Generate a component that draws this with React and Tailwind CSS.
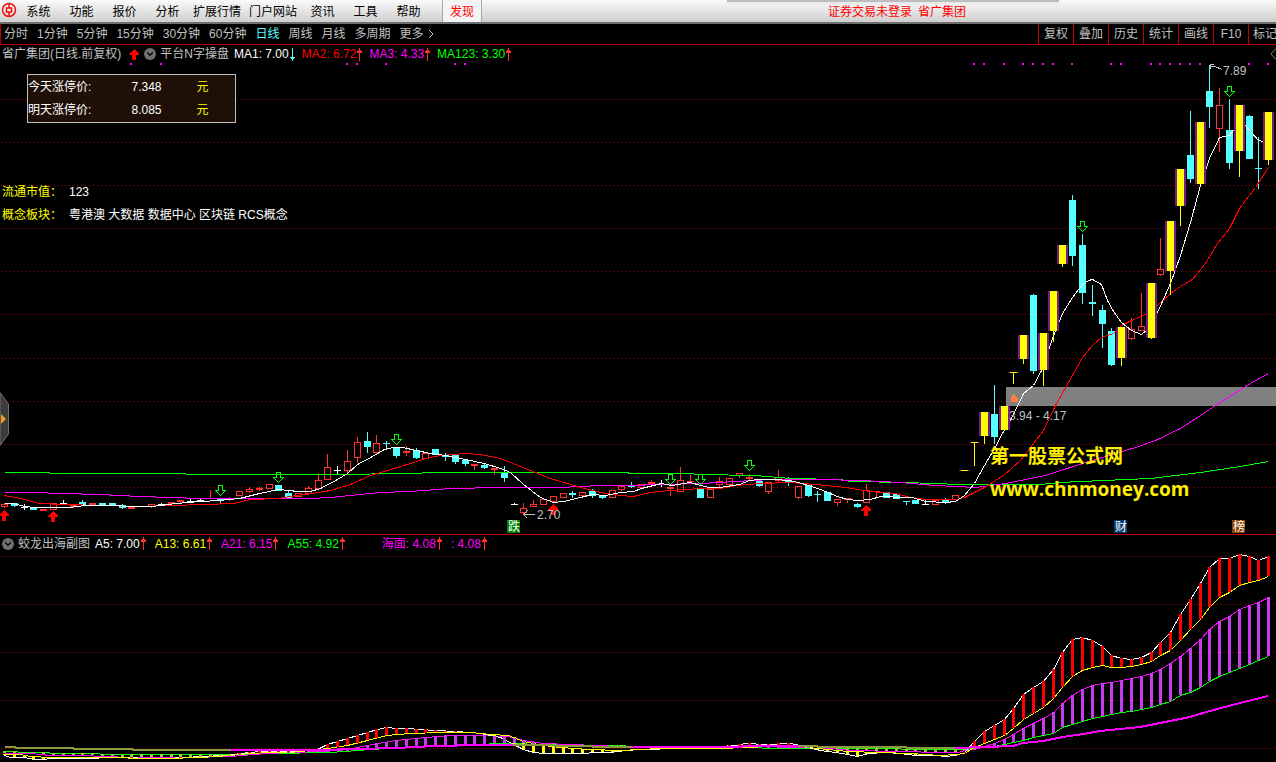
import React from "react";
import { ChevronDown } from "lucide-react";

const menus = ["系统", "功能", "报价", "分析", "扩展行情", "门户网站", "资讯", "工具", "帮助"];
const periods = ["分时", "1分钟", "5分钟", "15分钟", "30分钟", "60分钟", "日线", "周线", "月线", "多周期"];
const tools = ["复权", "叠加", "历史", "统计", "画线", "F10", "标记"];

const limits = [
  { label: "今天涨停价:", value: "7.348" },
  { label: "明天涨停价:", value: "8.085" },
];

const mainValues = [
  { text: "MA1: 7.00", color: "text-white", down: true },
  { text: "MA2: 6.72", color: "text-[#ff0000]" },
  { text: "MA3: 4.33", color: "text-[#ff00ff]" },
  { text: "MA123: 3.30", color: "text-[#00ff00]" },
];

const subValues = [
  { text: "A5: 7.00", color: "text-white" },
  { text: "A13: 6.61", color: "text-[#ffff00]" },
  { text: "A21: 6.15", color: "text-[#ff00ff]" },
  { text: "A55: 4.92", color: "text-[#00ff00]" },
];

const seaValues = [
  { text: "海面: 4.08", color: "text-[#ff00ff]" },
  { text: ": 4.08", color: "text-[#ff00ff]" },
];

// [kind, body top, body bottom, high, low]
// c = falling, r = rising, f = flat rising, w = doji, y = strong day
const candles = [
  ["r", 504, 507, 503, 508], ["c", 503, 506, 503, 507], ["w", 507, 508, 504, 510], ["c", 507, 510, 507, 510],
  ["f", 509, 511, 509, 511], ["r", 503, 510, 503, 510], ["w", 503, 504, 500, 504], ["f", 505, 507, 505, 508],
  ["c", 502, 505, 500, 505], ["f", 503, 505, 503, 505], ["c", 503, 505, 503, 506], ["c", 503, 506, 503, 506],
  ["c", 505, 508, 504, 509], ["f", 506, 509, 506, 509], ["f", 506, 507, 506, 507], ["r", 504, 507, 504, 508],
  ["w", 504, 505, 503, 506], ["f", 502, 504, 502, 504], ["f", 500, 502, 500, 503], ["w", 501, 502, 499, 503],
  ["w", 500, 501, 498, 502], ["f", 498, 499, 490, 499], ["c", 499, 501, 499, 503], ["f", 498, 499, 497, 501],
  ["r", 491, 496, 491, 496], ["r", 489, 492, 487, 493], ["f", 488, 490, 487, 491], ["r", 484, 489, 484, 489],
  ["c", 485, 491, 485, 491], ["c", 493, 498, 490, 498], ["r", 493, 497, 493, 497], ["r", 488, 494, 486, 495],
  ["r", 480, 489, 473, 490], ["r", 467, 480, 454, 480], ["w", 470, 471, 466, 474], ["r", 461, 471, 450, 473],
  ["r", 442, 458, 437, 463], ["c", 441, 447, 432, 453], ["r", 443, 453, 435, 455], ["c", 443, 444, 441, 449],
  ["c", 447, 456, 447, 458], ["f", 451, 453, 446, 456], ["c", 450, 458, 448, 459], ["r", 453, 459, 453, 459],
  ["c", 449, 455, 449, 455], ["c", 455, 457, 453, 461], ["c", 455, 462, 455, 464], ["c", 460, 464, 459, 466],
  ["f", 464, 466, 464, 470], ["c", 465, 468, 463, 469], ["f", 468, 470, 468, 475], ["c", 472, 478, 466, 482],
  ["w", 504, 505, 503, 505], ["r", 508, 513, 503, 515], ["r", 504, 507, 500, 507], ["r", 499, 505, 499, 505],
  ["r", 496, 502, 496, 502], ["r", 493, 498, 493, 498], ["c", 493, 495, 491, 498], ["r", 492, 496, 492, 498],
  ["c", 491, 496, 489, 498], ["c", 496, 498, 495, 499], ["r", 490, 498, 490, 498], ["r", 486, 490, 486, 491],
  ["c", 485, 487, 482, 488], ["r", 484, 488, 484, 490], ["r", 482, 484, 480, 484], ["w", 484, 485, 480, 487],
  ["f", 487, 489, 487, 496], ["r", 480, 492, 467, 492], ["f", 481, 482, 475, 482], ["c", 489, 498, 488, 498],
  ["r", 489, 498, 489, 498], ["r", 481, 485, 477, 488], ["r", 478, 485, 478, 485], ["r", 473, 476, 473, 478],
  ["f", 477, 479, 474, 480], ["c", 481, 486, 481, 487], ["r", 482, 492, 482, 494], ["r", 477, 481, 470, 482],
  ["c", 480, 482, 477, 486], ["r", 486, 498, 486, 499], ["c", 485, 496, 485, 497], ["c", 494, 495, 491, 502],
  ["c", 492, 501, 492, 501], ["r", 499, 503, 499, 506], ["f", 498, 500, 498, 503], ["c", 504, 507, 503, 508],
  ["r", 490, 503, 484, 503], ["f", 491, 492, 491, 497], ["c", 492, 498, 492, 498], ["c", 494, 499, 493, 499],
  ["c", 501, 502, 501, 505], ["c", 500, 504, 500, 504], ["w", 504, 505, 500, 505], ["r", 500, 505, 500, 505],
  ["c", 500, 502, 498, 504], ["r", 495, 500, 495, 500], ["y", 470, 471, 470, 471], ["y", 442, 443, 442, 466],
  ["y", 412, 436, 412, 444], ["c", 414, 437, 385, 444], ["y", 406, 430, 406, 430], ["y", 372, 373, 372, 384],
  ["y", 335, 359, 335, 364], ["c", 295, 371, 294, 374], ["y", 333, 370, 333, 386], ["y", 291, 331, 291, 342],
  ["y", 245, 264, 245, 267], ["c", 200, 256, 195, 266], ["c", 245, 293, 234, 304], ["c", 302, 304, 285, 316],
  ["c", 310, 324, 305, 348], ["c", 331, 365, 328, 366], ["y", 327, 358, 327, 366], ["r", 329, 339, 318, 340],
  ["r", 326, 331, 293, 331], ["y", 283, 338, 283, 339], ["r", 269, 275, 238, 276], ["y", 221, 271, 221, 295],
  ["y", 169, 206, 169, 226], ["c", 155, 179, 111, 183], ["y", 122, 184, 122, 184], ["c", 91, 107, 65, 128],
  ["r", 105, 129, 88, 152], ["c", 130, 163, 99, 169], ["y", 105, 151, 105, 177], ["c", 116, 159, 115, 159],
  ["c", 168, 169, 137, 189], ["y", 112, 160, 112, 165],
];

const colors = { c: "#54ffff", r: "#ff3232", f: "#ff3232", w: "#ffffff", y: "#ffff00" };

const barX = (i) => Math.round(4 + i * 9.8);

const mainLines = [
  {
    color: "#00ff00",
    points: "4,472 49,472 50,473 185,473 186,474 320,474 421,473 422,472 626,472 630,473 686,473 700,474 755,475 790,478 840,479 850,481 905,482 960,484 1040,484 1060,482 1080,481 1150,478 1200,472 1240,466 1268,461",
  },
  {
    color: "#ff00ff",
    points: "4,492 30,492 98,494 140,496 200,498 225,498 310,498 330,497 350,495 380,492 410,491 450,488 500,487 560,487 600,485 630,485 660,484 700,483 735,481 770,479 820,479 860,480 900,482 935,485 955,486 975,487 1005,483 1045,475 1085,462 1135,447 1155,440 1180,428 1200,415 1215,405 1250,383 1268,373",
  },
  {
    color: "#ff0000",
    points: "4,495 15,497 25,499 38,503 65,504 100,505 140,506 170,505 205,504 233,503 250,499 278,498 295,495 312,493 330,490 350,484 370,475 390,469 410,463 425,458 440,455 465,453 480,454 500,458 525,468 550,478 580,487 605,493 620,495 633,496 650,492 670,490 700,488 720,488 735,485 760,483 790,482 815,484 845,487 870,491 895,493 910,497 925,499 955,499 964,497 984,487 1003,475 1020,460 1043,430 1055,405 1068,382 1082,357 1092,345 1101,337 1113,333 1121,325 1131,320 1145,314 1157,305 1170,293 1180,286 1192,279 1205,263 1217,243 1229,228 1239,208 1255,187 1268,167",
  },
  {
    color: "#ffffff",
    points: "4,503 13,503 24,506 34,507 68,507 85,505 112,505 131,506 151,506 161,505 175,503 200,501 219,500 239,498 259,493 278,489 298,491 310,491 320,488 337,479 347,473 357,464 372,456 384,449 393,447 402,447 416,450 430,453 445,455 465,459 484,463 500,468 510,472 523,484 540,497 553,502 563,501 580,497 592,494 605,495 620,492 633,491 641,488 661,483 671,485 690,482 700,485 709,487 719,487 739,484 749,480 758,479 775,479 788,480 798,482 808,485 820,489 837,496 847,499 858,500 870,499 880,496 905,497 912,497 925,501 945,502 955,501 964,495 974,483 984,465 994,448 1003,431 1013,414 1023,393 1033,385 1041,370 1052,338 1062,313 1072,297 1082,284 1088,280 1092,279 1101,284 1107,300 1113,311 1121,322 1131,330 1141,334 1147,329 1157,312 1170,283 1180,255 1190,222 1200,185 1209,158 1219,137 1229,135 1234,129 1239,122 1245,125 1258,140 1263,141",
  },
];

// lower panel, left part as points, right part one value per bar from bar 98
const tail = (ys) => ys.map((y, n) => [barX(98 + n), y]);
const parse = (text) => text.split(" ").map((p) => p.split(",").map(Number));

const a5 = [
  ...parse("4,755 10,757 24,757 34,759 43,759 50,758 88,758 110,757 165,758 185,757 200,756 225,755 240,753 260,751 280,751 300,751 310,750 317,749 327,744 337,741 347,738 357,735 367,732 377,729 386,727 396,728 406,728 435,730 455,731 470,732 480,733 490,735 500,737 513,744 523,749 533,752 543,753 568,753 610,752 625,750 640,749 680,748 700,747 735,745 745,743 765,744 790,743 800,745 808,747 820,750 835,752 847,754 857,756 868,753 885,752 900,753 915,755 935,755 945,756 955,755"),
  ...tail([752, 741, 731, 725, 719, 708, 694, 687, 681, 669, 652, 639, 637, 640, 646, 655, 658, 659, 657, 652, 642, 632, 614, 599, 583, 567, 558, 558, 554, 556, 560, 556]),
];
const a13 = [
  ...parse("4,754 20,754 30,756 50,757 90,757 165,758 200,757 230,755 250,753 270,752 290,752 310,750 327,748 347,745 367,740 386,735 410,733 440,732 470,732 480,733 490,734 508,735 523,741 543,745 560,747 588,749 620,750 660,748 720,748 770,746 800,746 817,748 847,751 880,752 910,753 940,755 955,754"),
  ...tail([753, 747, 743, 739, 735, 728, 719, 713, 707, 698, 687, 676, 670, 667, 665, 667, 667, 666, 664, 661, 655, 650, 640, 629, 619, 607, 597, 592, 585, 582, 580, 576]),
];
const a21 = [
  ...parse("4,753 30,753 50,755 80,755 130,757 190,757 230,756 265,753 320,751 340,750 357,747 367,745 377,743 396,740 425,737 450,735 480,735 508,736 523,740 543,743 570,744 620,746 700,746 760,746 830,748 850,750 900,751 940,752 958,752"),
  ...tail([750, 749, 746, 743, 739, 734, 728, 723, 718, 712, 703, 695, 689, 685, 683, 682, 680, 678, 676, 673, 669, 663, 656, 648, 639, 629, 621, 616, 609, 605, 602, 597]),
];
const a55 = [
  ...parse("4,751 30,752 68,753 130,754 230,754 270,753 330,752 357,750 400,747 440,745 470,744 508,743 545,744 600,745 700,747 820,748 870,748 930,749 955,749"),
  ...tail([749, 748, 747, 746, 744, 742, 740, 737, 735, 733, 727, 724, 721, 718, 716, 714, 712, 711, 709, 707, 704, 701, 695, 692, 687, 681, 676, 672, 668, 664, 660, 656]),
];

const subLines = [
  { color: "#00ff00", points: a55 },
  { color: "#ff00ff", points: a21 },
  { color: "#ffffff", points: a5 },
  { color: "#ffff00", points: a13 },
];

const seaLines = [
  { color: "#8b9a3c", points: "5,747 15,747 16,748 73,748 74,749 132,749 133,750 231,750" },
  { color: "#ff00ff", points: "231,750 320,750 355,749 396,748 435,746 480,745 513,745" },
  { color: "#8b9a3c", points: "513,745 592,746 593,747 632,747" },
  { color: "#ff00ff", points: "632,747 740,747 745,746 798,746" },
  { color: "#8b9a3c", points: "798,746 817,746 818,747 906,747 907,748 955,748" },
  { color: "#ff00ff", points: "955,748 985,747 1013,746 1023,743 1043,741 1063,737 1083,734 1100,731 1140,727 1160,723 1190,717 1210,711 1240,703 1268,696" },
];

const yAt = (points, x) => {
  const next = points.findIndex((p) => p[0] >= x);
  if (next <= 0) return points[next === 0 ? 0 : points.length - 1][1];
  const [x0, y0] = points[next - 1];
  const [x1, y1] = points[next];
  return Math.round(y0 + ((y1 - y0) * (x - x0)) / (x1 - x0));
};

const signalDots = [13, 16, 35, 36, 39, 46, 47, 99, 100, 102, 104, 105, 106, 107, 109, 113, 114, 117, 118, 119, 120, 121, 122, 127, 129];
const sellMarks = [[220, 485], [278, 472], [396, 434], [670, 474], [700, 474], [749, 460], [1082, 221], [1229, 86]];
const buyMarks = [[4, 510], [53, 511], [553, 504], [866, 505]];
const tags = [
  { x: 507, text: "跌", fill: "#008000" },
  { x: 1114, text: "财", fill: "#003a70" },
  { x: 1232, text: "榜", fill: "#8b4000" },
];

const GridLines = ({ rows }) =>
  rows.map((y) => (
    <line key={y} x1="1" x2="1276" y1={y + 0.5} y2={y + 0.5} stroke="#b00000" strokeDasharray="1 3" />
  ));

const Candle = ({ x, candle }) => {
  const [kind, top, bottom, high, low] = candle;
  const color = colors[kind];
  if (kind === "r") {
    return (
      <g>
        <rect x={x} y={high} width="1" height={top - high} fill={color} />
        <rect x={x} y={bottom} width="1" height={low - bottom} fill={color} />
        <rect x={x - 2.5} y={top + 0.5} width="6" height={bottom - top - 1} fill="none" stroke={color} />
      </g>
    );
  }
  return (
    <g>
      {kind === "y" && <rect x={x - 5} y={top} width="11" height={bottom - top} fill="#7a1a8a" />}
      <rect x={x} y={high} width="1" height={low - high} fill={color} />
      <rect x={x - 3} y={top} width="7" height={bottom - top} fill={color} />
    </g>
  );
};

const MainChart = () => (
  <svg viewBox="0 63 1276 471" className="block h-auto w-full" shapeRendering="crispEdges">
    <GridLines rows={[99, 142, 185, 228, 271, 314, 358, 401, 444, 487]} />
    {signalDots.map((i) => (
      <rect key={i} x={barX(i) - 1} y="63" width="2" height="2" fill="#ff00ff" />
    ))}
    <rect x="1006" y="387" width="270" height="19" fill="#808080" />
    {candles.map((c, i) => c[0] !== "y" && <Candle key={i} x={barX(i)} candle={c} />)}
    {mainLines.map((line) => (
      <polyline key={line.color} points={line.points} fill="none" stroke={line.color} transform="translate(0.5 0.5)" />
    ))}
    {candles.map((c, i) => c[0] === "y" && <Candle key={i} x={barX(i)} candle={c} />)}
    {sellMarks.map(([x, y]) => (
      <path key={x} d={`M${x - 1.5} ${y + 0.5}h4v5h3l-5 5l-5 -5h3z`} fill="none" stroke="#00ff00" />
    ))}
    {buyMarks.map(([x, y]) => (
      <path key={x} d={`M${x} ${y}l5 5v1h-3v5h-4v-5h-3v-1z`} fill="#ff0000" />
    ))}
    <path d="M1013.500 394l4 4v4h-7v-4z" fill="#ff8040" />
    <g fill="none" stroke="#c0c0c0">
      <path d="M1213.500 64.500h-3v4M1210 66.500h5l7 3" />
      <path d="M527.500 510.500l-4 4l4 4M523 514.500h12" />
    </g>
    {tags.map((tag) => (
      <g key={tag.text}>
        <rect x={tag.x} y="520" width="13" height="13" fill={tag.fill} />
        <text x={tag.x + 1} y="531" fontSize="12" fill="#ffffff">{tag.text}</text>
      </g>
    ))}
    <g fontSize="12" fill="#c0c0c0">
      <text x="1223" y="75">7.89</text>
      <text x="1009" y="420">3.94 - 4.17</text>
      <text x="537" y="519">2.70</text>
    </g>
    <g className="font-['Open_Sans','Noto_Sans_CJK_SC',sans-serif] font-bold" fontSize="19" fill="#ffee00">
      <text x="990" y="463">第一股票公式网</text>
      <text x="990" y="496">www.chnmoney.com</text>
    </g>
  </svg>
);

const SubChart = () => (
  <svg viewBox="0 552 1276 210" className="block h-auto w-full" shapeRendering="crispEdges">
    <GridLines rows={[556, 604, 652, 700, 748]} />
    {subLines.map((line) => (
      <polyline
        key={line.color}
        points={line.points.map((p) => p.join(",")).join(" ")}
        fill="none"
        stroke={line.color}
        transform="translate(0.5 0.5)"
      />
    ))}
    {candles.map((c, i) => {
      const x = barX(i);
      const [fast, slow, mid, base] = [a5, a13, a21, a55].map((line) => yAt(line, x));
      return (
        <g key={i}>
          <rect x={x - 1} y={Math.min(fast, slow)} width="3" height={Math.abs(fast - slow)} fill={fast < slow ? "#ff0000" : "#ffff00"} />
          <rect x={x - 1} y={Math.min(mid, base)} width="3" height={Math.abs(mid - base)} fill={mid < base ? "#c83cf0" : "#9acd32"} />
        </g>
      );
    })}
    {seaLines.map((line) => (
      <polyline key={line.points} points={line.points} fill="none" stroke={line.color} strokeWidth="2" />
    ))}
  </svg>
);

const Trend = ({ down }) => (
  <svg viewBox="0 0 6 13" className="h-[13px] w-1.5 shrink-0" shapeRendering="crispEdges">
    {down ? (
      <path d="M3 0h1v9h2v1h-1v1h-1v2h-1v-2h-1v-1h-1v-1h2z" fill="#54ffff" />
    ) : (
      <path d="M3 0h1v2h1v1h1v2h-2v8h-1v-8h-2v-2h1v-1h1z" fill="#ff3232" />
    )}
  </svg>
);

const Values = ({ items }) =>
  items.map((item) => (
    <span key={item.text} className={`flex items-center ${item.color}`}>
      {item.text}
      <Trend down={item.down} />
    </span>
  ));

const FoldButton = ({ label }) => (
  <button type="button" aria-label={label} className="flex size-3 shrink-0 items-center justify-center rounded-full bg-[#707070]">
    <ChevronDown className="size-2.5 text-black" strokeWidth={3} />
  </button>
);

const App = () => {
  return (
    <div className="min-h-screen w-full overflow-hidden bg-black font-['Liberation_Sans','Noto_Sans_CJK_SC',sans-serif] text-xs leading-4 whitespace-nowrap text-[#c0c0c0]">
      {/* Menu bar */}
      <header className="relative flex h-6 border-b-2 border-[#6e6e6e] bg-linear-to-b from-[#fafafa] to-[#cfcfcf] text-black">
        <svg viewBox="0 0 17 22" className="h-[22px] w-[17px] shrink-0" fill="none" stroke="#f01010">
          <circle cx="9" cy="10" r="6.500" strokeWidth="1.500" />
          <rect x="6.500" y="8" width="5" height="4" strokeWidth="1.500" />
          <path d="M9 4v4M9 12v4" strokeWidth="1.500" />
        </svg>
        <nav className="flex">
          {menus.map((name) => (
            <button key={name} type="button" className={name.length > 2 ? "w-14 pt-0.5" : "w-[43px] pt-0.5"}>
              {name}
            </button>
          ))}
          <button type="button" className="ml-3 w-10 border-x border-[#a8a8a8] bg-[#f4f4f4] pt-0.5 text-[#ff0000]">
            发现
          </button>
        </nav>
        <p className="flex flex-1 items-center justify-center gap-1.5 pt-0.5 pl-9 text-[#ff0000]">
          <span>证券交易未登录</span>
          <span>省广集团</span>
        </p>
        <div className="absolute top-0 left-[57%] h-0.5 w-[26%] bg-[#bdbdbd] shadow-sm"></div>
      </header>

      {/* Period bar */}
      <div className="flex h-[21px] justify-between border-b border-l border-[#c00000]">
        <div className="flex gap-[9px] pl-[3px]">
          {periods.map((name) => (
            <button key={name} type="button" className={name === "日线" ? "text-[#54ffff]" : ""}>
              {name}
            </button>
          ))}
          <button type="button" className="flex items-center gap-1">
            更多
            <svg viewBox="0 0 6 10" className="h-2.5 w-1.5" fill="none" stroke="#c0c0c0">
              <path d="M1 1l4 4l-4 4" />
            </svg>
          </button>
        </div>
        <div className="flex">
          {tools.map((name) => (
            <button
              key={name}
              type="button"
              className={`shrink-0 overflow-hidden border-l border-[#c00000] ${name === "标记" ? "w-7 pl-1" : "w-[35px]"}`}
            >
              {name}
            </button>
          ))}
        </div>
      </div>

      {/* Price panel */}
      <section className="relative border-b border-[#c00000]">
        <div className="flex h-[18px] items-center gap-[5px] pl-0.5">
          <span className="flex items-center gap-2">
            省广集团(日线.前复权)
            <svg viewBox="0 0 10 11" className="h-[11px] w-2.5" shapeRendering="crispEdges">
              <path d="M5 0l5 5v1h-3v5h-4v-5h-3v-1z" fill="#ff0000" />
            </svg>
          </span>
          <span className="flex items-center gap-1">
            <FoldButton label="主图指标" />
            平台N字操盘
          </span>
          <span className="flex items-center gap-[7px]">
            <Values items={mainValues} />
          </span>
          <svg viewBox="0 0 6 12" className="ml-auto h-3 w-1.5" fill="none" stroke="#808080">
            <path d="M6 0.500l-5 5.500l5 5.500" />
          </svg>
        </div>
        <MainChart />

        <table className="absolute top-[29px] left-[27px] w-[209px] border border-[#c0c0c0] bg-[#1e1006] text-left text-white">
          <tbody>
            {limits.map((row) => (
              <tr key={row.label} className="h-6">
                <th scope="row" className="w-[104px] p-0 font-normal">{row.label}</th>
                <td className="w-[65px] p-0">{row.value}</td>
                <td className="p-0 text-[#ffff00]">元</td>
              </tr>
            ))}
          </tbody>
        </table>

        <dl className="absolute top-[139px] left-0.5 grid grid-cols-[auto_auto] gap-x-[7px] gap-y-[7px] text-white">
          <dt className="text-[#ffff00]">流通市值：</dt>
          <dd>123</dd>
          <dt className="text-[#ffff00]">概念板块：</dt>
          <dd>粤港澳 大数据 数据中心 区块链 RCS概念</dd>
        </dl>

        <button type="button" aria-label="展开侧栏" className="absolute top-[347px] left-0">
          <svg viewBox="0 0 9 54" className="h-[54px] w-[9px]">
            <path d="M0 0.500L8.500 12v30L0 53.500z" fill="#3c3c3c" stroke="#707070" />
            <path d="M1 22l5 5l-5 5z" fill="#f0a020" />
          </svg>
        </button>
      </section>

      {/* Indicator panel */}
      <section>
        <div className="flex h-[17px] items-center gap-[5px] pl-0.5">
          <span className="flex items-center gap-1">
            <FoldButton label="副图指标" />
            蛟龙出海副图
          </span>
          <span className="flex items-center gap-[9px]">
            <Values items={subValues} />
          </span>
          <span className="flex items-center gap-[9px] pl-8">
            <Values items={seaValues} />
          </span>
        </div>
        <SubChart />
      </section>
    </div>
  );
};

export default App;
